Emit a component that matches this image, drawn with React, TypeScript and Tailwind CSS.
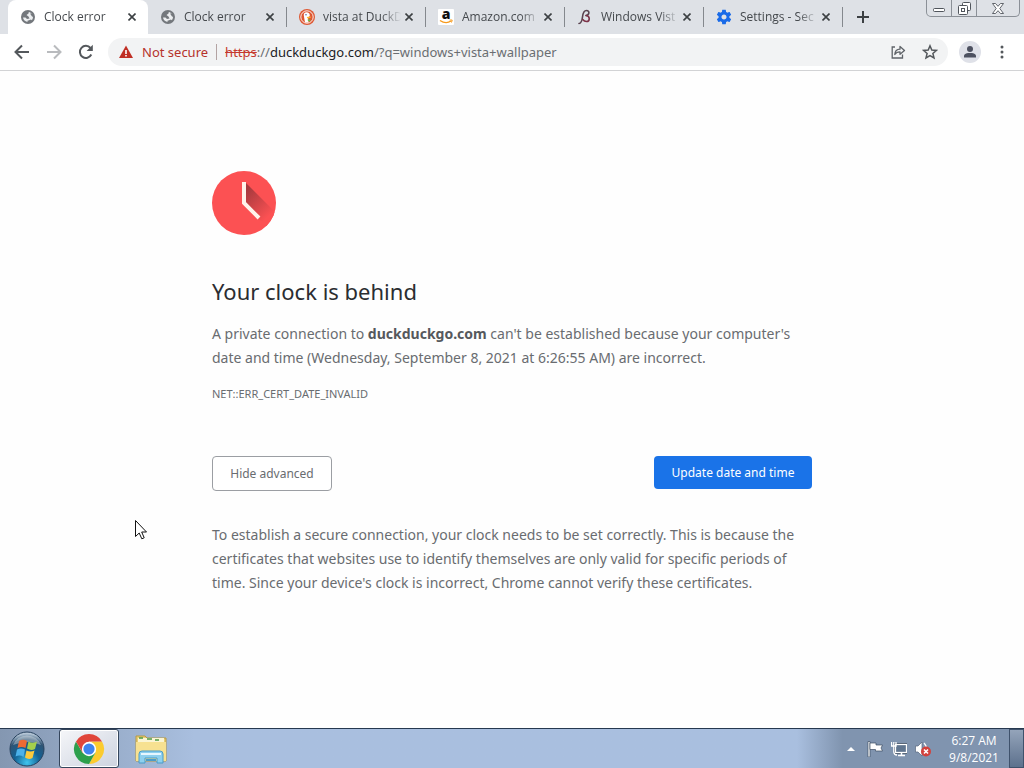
import React from 'react';

interface Tab {
  title: string;
  icon: React.ReactNode;
  active?: boolean;
}

function GlobeIcon() {
  return (
    <svg className="w-4 h-4 shrink-0" viewBox="0 0 16 16">
      <circle cx="8" cy="8" r="6" fill="#eceef0" stroke="#74787d" strokeWidth="2" />
      <path d="M2 6 L5 3 L9 2 L8.500 4.500 L6.500 6 L8.500 7.500 L9.500 9.500 L7 10 L5.500 8.500 L2 8.500 Z" fill="#74787d" />
      <path d="M10 4.500 L13 4.500 L14 8 L12 7.500 Z M7 12 L11 10.500 L12.500 12 L9 14 Z" fill="#74787d" />
    </svg>
  );
}

function DuckIcon() {
  return (
    <svg className="w-4 h-4 shrink-0" viewBox="0 0 16 16">
      <circle cx="8" cy="8" r="8" fill="#de5833" />
      <circle cx="8" cy="8" r="6.200" fill="none" stroke="#fff" strokeWidth="0.900" />
      <path d="M6 13.500 L4.800 6.500 C4.500 4 6 3 8 3.200 C10.200 3.400 11 5 10.800 7 L9 8.500 L9.500 13.600 Z" fill="#fff" />
      <path d="M7.800 8 L11.500 7.500 L12 8.500 L8.500 9.600 Z" fill="#fdb92c" />
      <circle cx="7" cy="5.800" r="0.700" fill="#2d4f8e" />
      <path d="M8.500 10.500 L11.500 10.500 L11 12.500 L9 12 Z" fill="#65bc46" />
    </svg>
  );
}

function AmazonIcon() {
  return (
    <svg className="w-4 h-4 shrink-0" viewBox="0 0 16 16">
      <rect width="16" height="16" rx="1" fill="#fff" />
      <text x="8" y="10" textAnchor="middle" fontFamily="Open Sans, sans-serif" fontWeight="800" fontSize="14" fill="#111">a</text>
      <path d="M2 11.500 Q8 15.500 13 12" fill="none" stroke="#f79a1c" strokeWidth="1.400" />
      <path d="M11.500 11 L14.200 11 L13.500 13.500" fill="none" stroke="#f79a1c" />
    </svg>
  );
}

function BetaIcon() {
  return (
    <svg className="w-4 h-4 shrink-0" viewBox="0 0 16 16">
      <g fill="none" strokeLinecap="round">
        <path d="M2 14.500 C4.500 14.500 5 12 5.500 8 C6 3.500 7 1.500 9.500 1.500 C13 1.500 12.500 6 9 6.500" stroke="#5a4450" strokeWidth="1.600" />
        <path d="M9 6.500 C13.500 7 13 12.500 9.500 12.500 C7.500 12.500 6.500 11.500 5.800 10.500" stroke="#7c3348" strokeWidth="1.600" />
      </g>
    </svg>
  );
}

function GearIcon() {
  return (
    <svg className="w-4 h-4 shrink-0" viewBox="1 1 22 22" fill="#1a6be8">
      <path d="M19.430 12.980c.040-.320.070-.640.070-.980s-.030-.660-.070-.980l2.110-1.650c.190-.150.240-.420.120-.640l-2-3.460c-.120-.220-.390-.300-.610-.220l-2.490 1c-.520-.400-1.080-.730-1.690-.980l-.380-2.650C14.460 2.180 14.250 2 14 2h-4c-.250 0-.460.180-.490.420l-.380 2.650c-.610.250-1.170.590-1.690.980l-2.490-1c-.230-.090-.490 0-.610.220l-2 3.460c-.130.220-.070.490.120.640l2.110 1.650c-.040.320-.070.650-.070.980s.030.660.070.980l-2.110 1.650c-.190.150-.240.420-.120.640l2 3.460c.120.220.390.300.610.220l2.490-1c.520.400 1.080.730 1.690.980l.380 2.650c.030.240.240.420.490.420h4c.250 0 .460-.180.490-.420l.380-2.650c.610-.250 1.170-.590 1.690-.980l2.490 1c.230.090.490 0 .610-.220l2-3.460c.120-.220.070-.490-.120-.640l-2.110-1.650zM12 15.500c-1.930 0-3.500-1.570-3.500-3.500s1.570-3.500 3.500-3.500 3.500 1.570 3.500 3.500-1.570 3.500-3.500 3.500z" />
    </svg>
  );
}

const tabs: Tab[] = [
  { title: 'Clock error', icon: <GlobeIcon />, active: true },
  { title: 'Clock error', icon: <GlobeIcon /> },
  { title: 'vista at DuckD', icon: <DuckIcon /> },
  { title: 'Amazon.com', icon: <AmazonIcon /> },
  { title: 'Windows Vist', icon: <BetaIcon /> },
  { title: 'Settings - Sec', icon: <GearIcon /> },
];

function TabItem({ title, icon, active }: Tab) {
  return (
    <div
      className={
        active
          ? 'flex items-center flex-1 min-w-0 max-w-[140px] h-full pl-3 pr-2 bg-white rounded-t-lg'
          : 'flex items-center flex-1 min-w-0 max-w-[139px] h-full pl-3'
      }
    >
      {icon}
      <span className="flex-1 min-w-0 ml-2 overflow-hidden whitespace-nowrap text-[12px] leading-4 text-[#45494d] mask-r-from-75%">
        {title}
      </span>
      <button type="button" aria-label="Close tab" className="flex items-center justify-center w-4 h-4">
        <svg className="w-2 h-2" viewBox="0 0 8 8" stroke="#3c4043" strokeWidth="1.600">
          <path d="M0.500 0.500 L7.500 7.500 M7.500 0.500 L0.500 7.500" />
        </svg>
      </button>
      {!active && <span className="w-px h-5 ml-2 bg-[#84888d]" />}
    </div>
  );
}

function WindowControls() {
  return (
    <div className="flex self-start h-[17px] ml-auto mr-1 border border-t-0 border-[#8b9097] rounded-b-[5px]">
      <button type="button" aria-label="Minimize" className="flex items-end justify-center w-6 pb-1">
        <svg className="w-3 h-1" viewBox="0 0 12 4">
          <rect x="0.500" y="0.500" width="11" height="3" rx="1" fill="#fff" stroke="#50555c" />
        </svg>
      </button>
      <button type="button" aria-label="Restore" className="flex items-center justify-center w-[26px] border-x border-[#8b9097]">
        <svg className="w-[13px] h-[13px]" viewBox="0 0 13 13" fill="#fff" stroke="#50555c">
          <rect x="4.500" y="0.500" width="8" height="8" rx="1" />
          <rect x="0.500" y="3.500" width="9" height="9" rx="1" />
          <rect x="3.500" y="6.500" width="3" height="3" />
        </svg>
      </button>
      <button type="button" aria-label="Close" className="flex items-center justify-center w-[42px]">
        <svg className="w-3 h-[11px]" viewBox="0 0 12 11" fill="#fff" stroke="#50555c" strokeWidth="0.900">
          <path d="M0.500 0.500 H3.500 L6 3.300 L8.500 0.500 H11.500 L7.800 5.500 L11.500 10.500 H8.500 L6 7.700 L3.500 10.500 H0.500 L4.200 5.500 Z" />
        </svg>
      </button>
    </div>
  );
}

function Toolbar() {
  return (
    <div className="flex items-center gap-1 h-[37px] px-2 bg-white border-b border-[#d2d3d5]">
      <button type="button" aria-label="Back" className="flex items-center justify-center w-7 h-7">
        <svg className="w-4 h-4" viewBox="0 0 16 16" fill="none" stroke="#54585c" strokeWidth="2">
          <path d="M15 8 H2 M8 1.500 L1.500 8 L8 14.500" />
        </svg>
      </button>
      <button type="button" aria-label="Forward" className="flex items-center justify-center w-7 h-7">
        <svg className="w-4 h-4" viewBox="0 0 16 16" fill="none" stroke="#b9bbbe" strokeWidth="2">
          <path d="M1 8 H14 M8 1.500 L14.500 8 L8 14.500" />
        </svg>
      </button>
      <button type="button" aria-label="Reload" className="flex items-center justify-center w-7 h-7">
        <svg className="w-4 h-4" viewBox="0 0 16 16">
          <path d="M13.300 10.500 A6 6 0 1 1 12.500 4" fill="none" stroke="#54585c" strokeWidth="2" />
          <path d="M14.800 0.800 V7 H8.600 Z" fill="#54585c" />
        </svg>
      </button>

      {/* Address bar */}
      <div className="flex items-center flex-1 min-w-0 h-7 ml-1 pl-2.5 pr-1.5 bg-[#f2f3f4] rounded-full font-['Noto_Sans',sans-serif] text-[13px] leading-5">
        <svg className="w-4 h-4 shrink-0" viewBox="0 0 16 16">
          <path d="M8 1.500 L15 14 H1 Z" fill="#c02f25" />
          <path d="M7.200 6 H8.800 V10 H7.200 Z M7.200 11 H8.800 V12.500 H7.200 Z" fill="#fff" />
        </svg>
        <span className="ml-2 text-[#b5322b] whitespace-nowrap">Not secure</span>
        <span className="w-px h-4 mx-2 bg-[#b3a3a3]" />
        <div className="flex-1 min-w-0 overflow-hidden whitespace-nowrap text-[#6a6e72]">
          <span className="text-[#c5392f] line-through">https</span>://<span className="text-[#202124]">duckduckgo.com</span>/?q=windows+vista+wallpaper
        </div>
        <button type="button" aria-label="Share this page" className="flex items-center justify-center w-6 h-6">
          <svg className="w-4 h-4" viewBox="0 0 16 16" fill="none" stroke="#5f6368" strokeWidth="1.300">
            <path d="M5 3 H2.200 V14 H12.500 V10.500" />
            <path d="M4.800 10.500 C5 7 7 5.300 10 5.200 V2.500 L14.500 6.500 L10 10.300 V7.800 C7.500 7.800 6 8.500 4.800 10.500 Z" strokeLinejoin="round" />
          </svg>
        </button>
        <button type="button" aria-label="Bookmark this tab" className="flex items-center justify-center w-6 h-6 ml-2">
          <svg className="w-4 h-4" viewBox="0 0 16 16" fill="none" stroke="#54585c" strokeWidth="1.500">
            <path d="M8 1.800 L9.800 6 L14.400 6.400 L10.900 9.400 L12 13.900 L8 11.500 L4 13.900 L5.100 9.400 L1.600 6.400 L6.200 6 Z" />
          </svg>
        </button>
      </div>

      <button type="button" aria-label="Profile" className="flex items-center justify-center w-7 h-7 ml-1">
        <svg className="w-[22px] h-[22px]" viewBox="0 0 22 22">
          <circle cx="11" cy="11" r="11" fill="#dfe1e8" />
          <circle cx="11" cy="8" r="3" fill="#4d5160" />
          <path d="M5 16.500 V15 C5 12.500 8.500 12 11 12 C13.500 12 17 12.500 17 15 V16.500 Z" fill="#4d5160" />
        </svg>
      </button>
      <button type="button" aria-label="Menu" className="flex items-center justify-center w-7 h-7">
        <svg className="w-4 h-4" viewBox="0 0 16 16" fill="#54585c">
          <circle cx="8" cy="3" r="1.500" />
          <circle cx="8" cy="8" r="1.500" />
          <circle cx="8" cy="13" r="1.500" />
        </svg>
      </button>
    </div>
  );
}

function ClockError() {
  return (
    <main className="flex-1 px-6 pt-[100px] bg-[#fefefe]">
      <div className="w-full max-w-[600px] mx-auto font-['Noto_Sans',sans-serif] text-[14px] leading-6 text-[#696c70]">
        <svg className="w-16 h-16" viewBox="0 0 64 64">
          <defs>
            <clipPath id="face">
              <circle cx="32" cy="32" r="32" />
            </clipPath>
            <linearGradient id="shade" gradientUnits="userSpaceOnUse" x1="34" y1="20" x2="58" y2="44">
              <stop offset="0" stopColor="#a83a3e" />
              <stop offset="1" stopColor="#fc5153" />
            </linearGradient>
          </defs>
          <circle cx="32" cy="32" r="32" fill="#fc5153" />
          <path d="M33 11 L66 44 L66 66 L47 48 L32 32 Z" fill="url(#shade)" clipPath="url(#face)" />
          <path d="M32 11 V32 L47 47" fill="none" stroke="#fff3ea" strokeWidth="4" />
        </svg>

        {/* Heading */}
        <h1 className="mt-10 mb-[15px] text-[22px] leading-8 text-[#2b2d31]">Your clock is behind</h1>
        <p>
          A private connection to <strong className="font-bold text-[#55585c]">duckduckgo.com</strong> can't be established because your computer's date and time (Wednesday, September 8, 2021 at 6:26:55 AM) are incorrect.
        </p>
        <p className="mt-3 text-[11px]">NET::ERR_CERT_DATE_INVALID</p>

        {/* Actions */}
        <div className="flex items-start justify-between mt-[50px] text-[12px] leading-4">
          <button type="button" className="w-[120px] h-[35px] bg-white border border-[#9b9ea3] rounded text-[#696c70]">
            Hide advanced
          </button>
          <button type="button" className="w-[158px] h-[33px] bg-[#1a73e8] rounded text-white">
            Update date and time
          </button>
        </div>

        <p className="mt-8">
          To establish a secure connection, your clock needs to be set correctly. This is because the certificates that websites use to identify themselves are only valid for specific periods of time. Since your device's clock is incorrect, Chrome cannot verify these certificates.
        </p>
      </div>
    </main>
  );
}

function StartOrb() {
  return (
    <svg className="w-9 h-9" viewBox="0 0 36 36">
      <defs>
        <radialGradient id="orb" cx="0.500" cy="0.900" r="0.850">
          <stop offset="0" stopColor="#3fc5ee" />
          <stop offset="0.450" stopColor="#126194" />
          <stop offset="0.800" stopColor="#2f5474" />
          <stop offset="1" stopColor="#b5c6d6" />
        </radialGradient>
      </defs>
      <circle cx="18" cy="18" r="17" fill="url(#orb)" stroke="#26415e" />
      <path d="M4 14 A15 15 0 0 1 32 14 Q18 8 4 14 Z" fill="#fff" opacity="0.350" />
      <path d="M10 10 Q14 7.500 18 10 L16.500 17 Q12.500 15 8.500 17 Z" fill="#ee6a34" />
      <path d="M19.500 10.500 Q23.500 13 28 10.500 L26 18 Q22 20 18 17.500 Z" fill="#a4cf4c" />
      <path d="M8 18.500 Q12 16.500 16 18.500 L14.500 26 Q11 23.500 6.500 25.500 Z" fill="#4bb1ea" />
      <path d="M17.500 19.500 Q21.500 21.500 25.500 19.500 L23.500 27 Q19.500 29 16 26.500 Z" fill="#fbc93c" />
    </svg>
  );
}

function ChromeLogo() {
  return (
    <svg className="w-8 h-8" viewBox="0 0 32 32">
      <path d="M29 8.500 A15 15 0 0 1 16 31 L22.500 19.500 L16 8.500 Z" fill="#fbcb2e" />
      <path d="M3 8.500 A15 15 0 0 0 16 31 L22.500 19.500 L9.500 19.800 Z" fill="#2c9f4c" />
      <path d="M3 8.500 L9.800 20 L16 16 L16 8.500 H29 A15 15 0 0 0 3 8.500 Z" fill="#e0453a" />
      <circle cx="16" cy="16" r="7.200" fill="#fff" />
      <circle cx="16" cy="16" r="5.600" fill="#3f83ee" />
    </svg>
  );
}

function ExplorerIcon() {
  return (
    <svg className="w-8 h-8" viewBox="0 0 32 32">
      <path d="M1 3 H10 L12 5 H31 V28 H1 Z" fill="#e8cd72" stroke="#b79a45" />
      <path d="M3 5 H29 V12 H3 Z" fill="#fbf5d3" />
      <path d="M4 5 H8 M12 6 H17 M20 7 H24" stroke="#4f9b46" strokeWidth="1.500" />
      <path d="M1 9 H31 V28 H1 Z" fill="#f7e191" />
      <path d="M4 30 V21 Q4 18 7 18 H25 Q28 18 28 21 V30 H22 V25 H10 V30 Z" fill="#8ed0ee" stroke="#4b9cc8" />
      <path d="M6 21 H26" stroke="#e6f7ff" strokeWidth="2" />
      <path d="M11 27 H21" stroke="#4b9cc8" strokeWidth="2" />
    </svg>
  );
}

function Taskbar() {
  return (
    <footer className="flex items-stretch h-10 border-t border-[#26384f] bg-linear-to-r from-[#8497b1] from-0% via-[#a9bfdf] via-19% to-[#a9bfdf]">
      <button type="button" aria-label="Start" className="flex items-center justify-center w-[54px]">
        <StartOrb />
      </button>
      <button type="button" aria-label="Google Chrome" className="flex items-center justify-center w-[60px] ml-[5px] bg-linear-to-br from-[#f5f6f9] to-[#cdd3df] border border-[#35465c] rounded-[3px] inset-ring inset-ring-white">
        <ChromeLogo />
      </button>
      <button type="button" aria-label="Windows Explorer" className="flex items-center justify-center w-[60px] ml-0.5">
        <ExplorerIcon />
      </button>

      {/* Notification area */}
      <div className="flex items-center ml-auto pl-[46px] bg-linear-to-r from-[#a9bfdf] to-[#8094af] to-20%">
        <button type="button" aria-label="Show hidden icons" className="flex items-center justify-center w-4 h-4">
          <svg className="w-2 h-1" viewBox="0 0 8 4" fill="#fff">
            <path d="M4 0 L8 4 H0 Z" />
          </svg>
        </button>
        <svg className="w-4 h-4 ml-2" viewBox="0 0 16 16">
          <path d="M1 0.500 H3 V16 H1 Z" fill="#fff" stroke="#3d4d63" strokeWidth="0.700" />
          <path d="M3 2 H9 V4 H15.500 L14 7 L15.500 10 H8.500 V8.500 H3 Z" fill="#fff" stroke="#3d4d63" strokeWidth="0.700" />
        </svg>
        <svg className="w-4 h-4 ml-2" viewBox="0 0 16 16">
          <rect x="4.500" y="3.500" width="11" height="8" fill="#5b7290" stroke="#2f3c4f" strokeWidth="2.600" />
          <rect x="4.500" y="3.500" width="11" height="8" fill="#60758f" stroke="#fff" strokeWidth="1.300" />
          <path d="M7 14.500 H14 M10.500 12 V14" stroke="#fff" strokeWidth="1.500" />
          <path d="M0.500 1 V5 H5 V1 M2.800 1 V11 Q3 14 6 14" fill="none" stroke="#fff" strokeWidth="1.300" />
        </svg>
        <svg className="w-4 h-4 ml-2" viewBox="0 0 16 16">
          <path d="M0.500 5 H3 L7 1 V15 L3 11 H0.500 Z" fill="#fff" stroke="#56667d" strokeWidth="0.700" />
          <path d="M9 2 Q12 5 11 8" fill="none" stroke="#fff" strokeWidth="1.200" />
          <circle cx="11" cy="10.500" r="5" fill="#d3413c" />
          <path d="M9 8.500 L13 12.500 M13 8.500 L9 12.500" stroke="#fff" strokeWidth="1.600" />
        </svg>
        <time className="flex flex-col items-center w-[58px] ml-3.5 text-[12px] leading-[17px] text-white whitespace-nowrap">
          <span>6:27 AM</span>
          <span>9/8/2021</span>
        </time>
        <button type="button" aria-label="Show desktop" className="self-stretch w-[15px] ml-1.5 border border-[#3f526c] bg-linear-to-b from-[#94a4ba] to-[#5d718d]" />
      </div>
    </footer>
  );
}

export default function App() {
  return (
    <div className="relative flex flex-col min-h-screen bg-white font-['Open_Sans','Noto_Sans',sans-serif]">
      <div className="flex items-center h-[34px] pl-2 bg-[#dee1e6]">
        {tabs.map((tab, i) => (
          <TabItem key={i} {...tab} />
        ))}
        <button type="button" aria-label="New tab" className="flex items-center justify-center w-7 h-7 ml-1.5">
          <svg className="w-3 h-3" viewBox="0 0 12 12" stroke="#3c4043" strokeWidth="2">
            <path d="M6 0 V12 M0 6 H12" />
          </svg>
        </button>
        <WindowControls />
      </div>
      <Toolbar />
      <ClockError />
      <Taskbar />

      {/* Mouse pointer */}
      <svg className="absolute left-[135px] top-[520px] w-3 h-5" viewBox="0 0 12 20">
        <path d="M0.500 0.500 V16.500 L4.200 13 L6.800 18.800 L9.200 17.800 L6.700 12 H11.500 Z" fill="#fff" stroke="#111" />
      </svg>
    </div>
  );
}
